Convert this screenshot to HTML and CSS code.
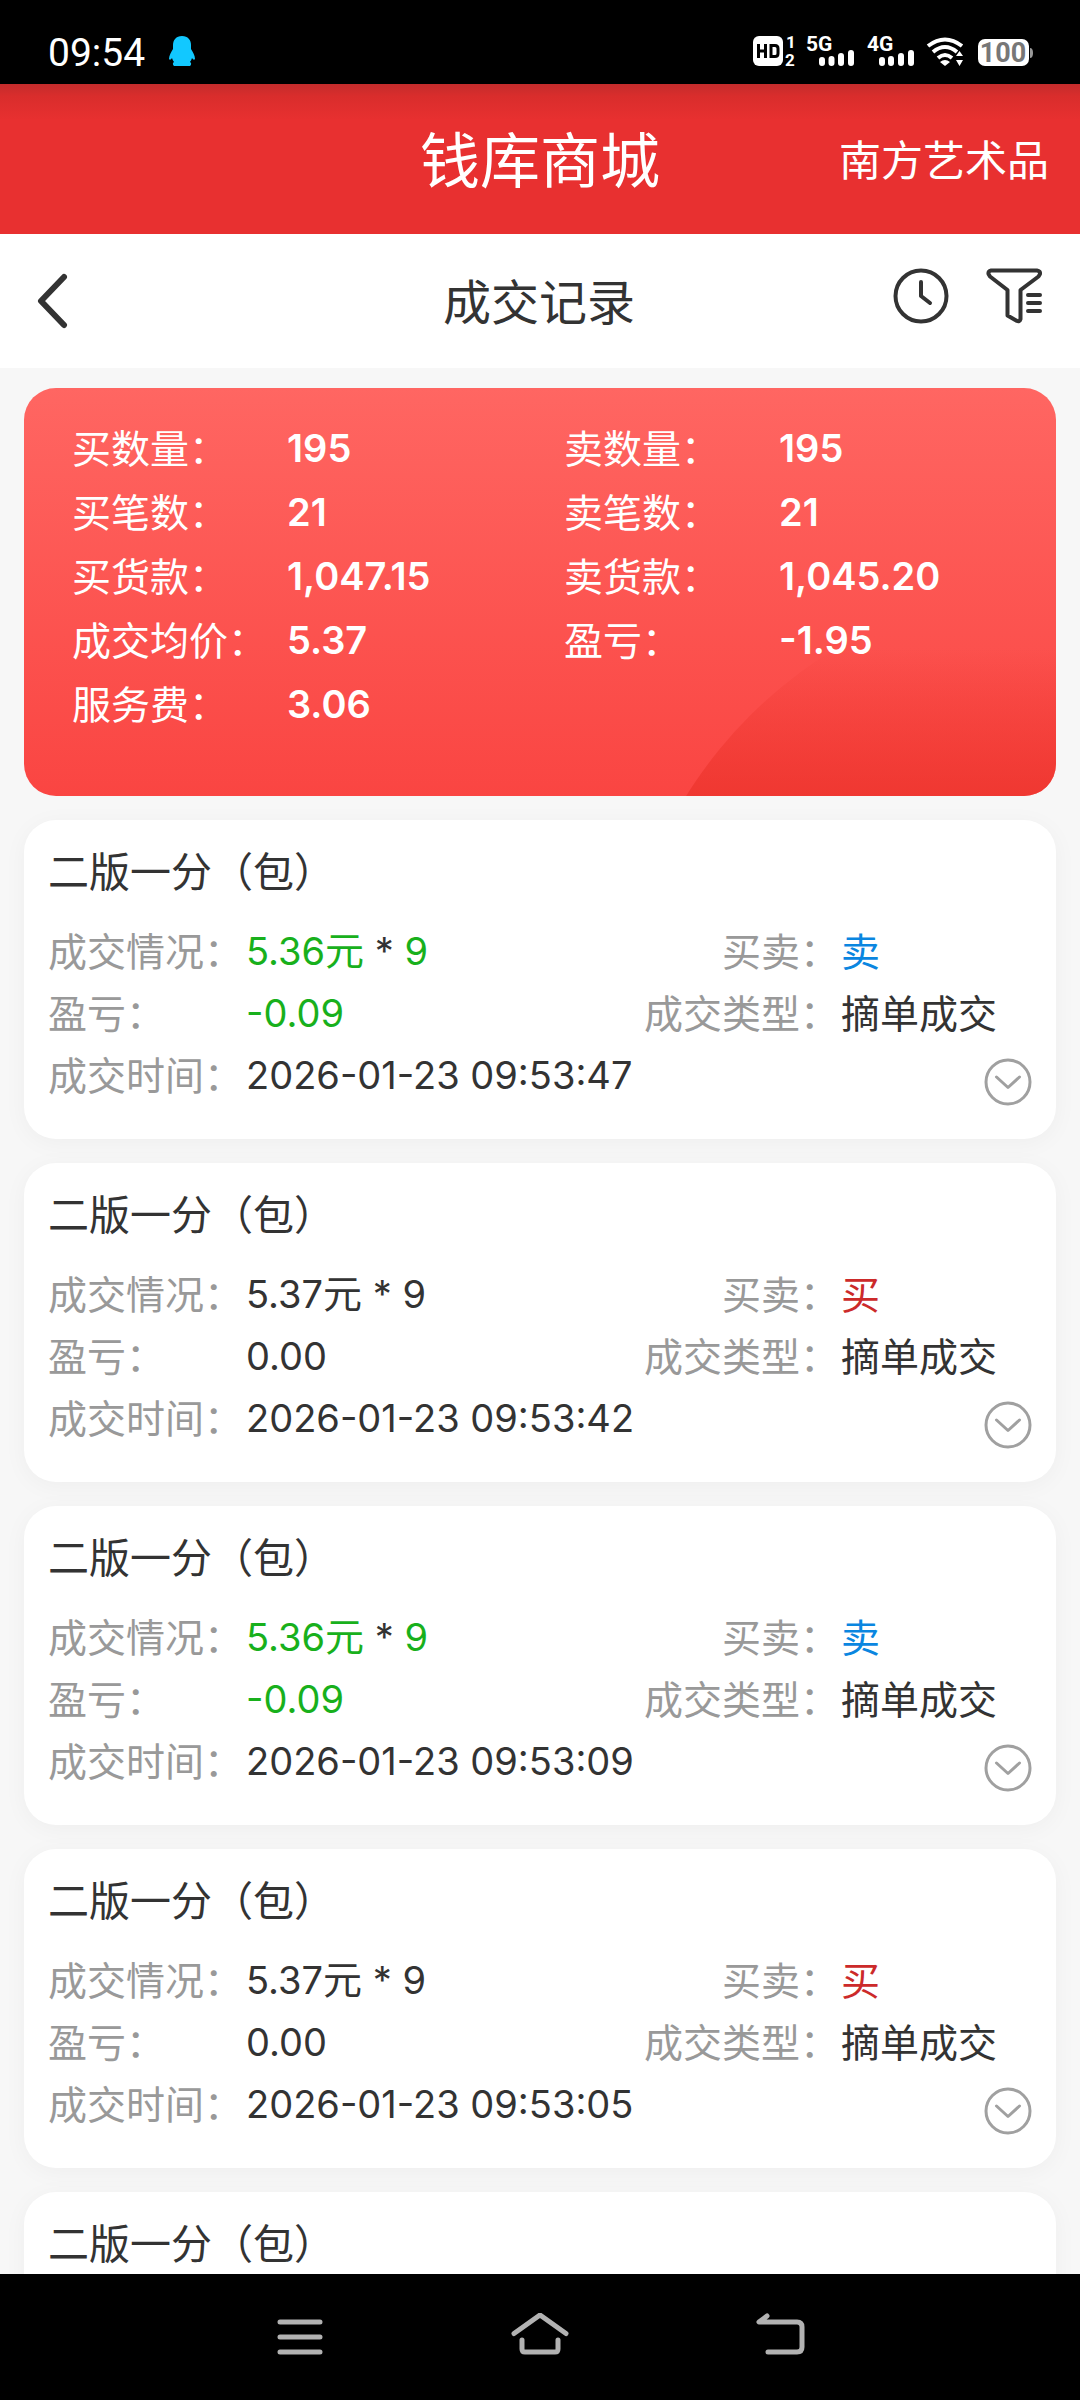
FILE: index.html
```html
<!DOCTYPE html>
<html lang="zh-CN">
<head>
<meta charset="utf-8">
<meta name="viewport" content="width=device-width, initial-scale=1">
<title>成交记录</title>
<link rel="stylesheet" href="styles.css">
</head>
<body>
<svg class="defs" width="0" height="0" aria-hidden="true">
  <symbol id="expand" viewBox="0 0 48 48">
    <circle cx="24" cy="24" r="22" fill="none" stroke="#a0a0a0" stroke-width="3"/>
    <path d="M12.500 19 24 29.500 35.500 19" fill="none" stroke="#a0a0a0" stroke-width="3" stroke-linecap="round" stroke-linejoin="round"/>
  </symbol>
</svg>
<div class="app">
  <div class="status">
    <span class="status-time">09:54</span>
    <svg class="status-qq" width="26" height="30" viewBox="0 0 26 30" aria-hidden="true">
      <path fill="#12c8ff" d="M13 0C7 0 4 4 4 9v4C2 16 0 20 0 23c1 1.500 2.500 0 3-1 .5 2 1.500 3 2 4-1.500.5-1.500 3 0 4h16c1.500-1 1.500-3.500 0-4 .5-1 1.500-2 2-4 .5 1 2 2.500 3 1 0-3-2-7-4-10V9c0-5-3-9-9-9z"/>
    </svg>
    <svg class="status-icons" width="280" height="50" viewBox="0 -10 280 50" fill="#fff" aria-hidden="true">
      <rect width="30" height="30" rx="6"/>
      <path d="M5.500 8v14M12.500 8v14M5.500 15h7M18 9.500h4q3 0 3 3v5q0 3-3 3h-4z" fill="none" stroke="#000" stroke-width="3"/>
      <text x="33" y="12" class="sim">1</text>
      <text x="32" y="30" class="sim">2</text>
      <text x="53" y="15" class="net">5G</text>
      <path d="M69 24v3M78.500 23v4M88 20v7M98 17v10" stroke="#fff" stroke-width="6" stroke-linecap="round"/>
      <text x="114" y="15" class="net">4G</text>
      <path d="M129 24v3M138 23v4M148 20v7M158 17v10" stroke="#fff" stroke-width="6" stroke-linecap="round"/>
      <g fill="none" stroke="#fff" stroke-width="4">
        <path d="M175 10q17-13 34 0"/>
        <path d="M180 16q12-10 24 0"/>
        <path d="M185 22q7-6 14 0"/>
      </g>
      <path d="M187 26q5-4 10 0l-5 4zM203 20l3.500-5 3.500 5zM203 24h7l-3.500 6z"/>
      <rect x="225" y="3" width="51" height="27" rx="7"/>
      <path d="M277 12q3 0 3 5t-3 5z" fill="#999"/>
      <text x="250" y="26" class="battery" text-anchor="middle">100</text>
    </svg>
  </div>

  <header class="brand">
    <h1 class="brand-name">钱库商城</h1>
    <a class="brand-link" href="#">南方艺术品</a>
  </header>

  <div class="toolbar">
    <button class="icon-button" type="button" aria-label="返回">
      <svg width="32" height="56" viewBox="0 0 32 56"><path d="M28 4 5 28 28 52" fill="none" stroke="#333" stroke-width="6" stroke-linecap="round" stroke-linejoin="round"/></svg>
    </button>
    <h2 class="toolbar-title">成交记录</h2>
    <div class="toolbar-actions">
      <button class="icon-button" type="button" aria-label="时间">
        <svg width="56" height="56" viewBox="0 0 56 56" fill="none" stroke="#333" stroke-width="4" stroke-linecap="round"><circle cx="28" cy="28" r="25.500"/><path d="M28 14v14l9 7" stroke-linejoin="round"/></svg>
      </button>
      <button class="icon-button" type="button" aria-label="筛选">
        <svg width="56" height="56" viewBox="0 0 56 56" fill="none" stroke="#333" stroke-width="4" stroke-linecap="round" stroke-linejoin="round"><path d="M5 2.500h46q3.500.5 3 3.500l-1.500 2.500L34.500 22v29q-1 3-3.500 2l-9.500-5.500V22L4 8.500 2.500 6q-.5-3 2.500-3.500zM42 27h12M42 35h12M42 43h12"/></svg>
      </button>
    </div>
  </div>

  <main class="content">
    <section class="summary">
      <span>买数量：</span><b>195</b><span>卖数量：</span><b>195</b>
      <span>买笔数：</span><b>21</b><span>卖笔数：</span><b>21</b>
      <span>买货款：</span><b>1,047.15</b><span>卖货款：</span><b>1,045.20</b>
      <span>成交均价：</span><b>5.37</b><span>盈亏：</span><b>-1.95</b>
      <span>服务费：</span><b>3.06</b>
    </section>

    <article class="card">
      <h3 class="card-title">二版一分（包）</h3>
      <div class="details">
        <span class="label">成交情况：</span><span class="value"><span class="gain">5.36<span class="unit">元</span></span> * <span class="gain">9</span></span>
        <span class="label end">买卖：</span><span class="text sell">卖</span>
        <span class="label">盈亏：</span><span class="value gain">-0.09</span>
        <span class="label end">成交类型：</span><span class="text">摘单成交</span>
        <span class="label">成交时间：</span><time class="value wide">2026-01-23 09:53:47</time>
        <button class="icon-button expand" type="button" aria-label="展开"><svg width="48" height="48"><use href="#expand"/></svg></button>
      </div>
    </article>

    <article class="card">
      <h3 class="card-title">二版一分（包）</h3>
      <div class="details">
        <span class="label">成交情况：</span><span class="value">5.37<span class="unit">元</span> * 9</span>
        <span class="label end">买卖：</span><span class="text buy">买</span>
        <span class="label">盈亏：</span><span class="value">0.00</span>
        <span class="label end">成交类型：</span><span class="text">摘单成交</span>
        <span class="label">成交时间：</span><time class="value wide">2026-01-23 09:53:42</time>
        <button class="icon-button expand" type="button" aria-label="展开"><svg width="48" height="48"><use href="#expand"/></svg></button>
      </div>
    </article>

    <article class="card">
      <h3 class="card-title">二版一分（包）</h3>
      <div class="details">
        <span class="label">成交情况：</span><span class="value"><span class="gain">5.36<span class="unit">元</span></span> * <span class="gain">9</span></span>
        <span class="label end">买卖：</span><span class="text sell">卖</span>
        <span class="label">盈亏：</span><span class="value gain">-0.09</span>
        <span class="label end">成交类型：</span><span class="text">摘单成交</span>
        <span class="label">成交时间：</span><time class="value wide">2026-01-23 09:53:09</time>
        <button class="icon-button expand" type="button" aria-label="展开"><svg width="48" height="48"><use href="#expand"/></svg></button>
      </div>
    </article>

    <article class="card">
      <h3 class="card-title">二版一分（包）</h3>
      <div class="details">
        <span class="label">成交情况：</span><span class="value">5.37<span class="unit">元</span> * 9</span>
        <span class="label end">买卖：</span><span class="text buy">买</span>
        <span class="label">盈亏：</span><span class="value">0.00</span>
        <span class="label end">成交类型：</span><span class="text">摘单成交</span>
        <span class="label">成交时间：</span><time class="value wide">2026-01-23 09:53:05</time>
        <button class="icon-button expand" type="button" aria-label="展开"><svg width="48" height="48"><use href="#expand"/></svg></button>
      </div>
    </article>

    <article class="card">
      <h3 class="card-title">二版一分（包）</h3>
    </article>
  </main>

  <nav class="system-nav">
    <button class="icon-button" type="button" aria-label="最近任务">
      <svg width="60" height="48" viewBox="0 0 60 48" fill="none" stroke="#b2b2b2" stroke-width="5" stroke-linecap="round"><path d="M10 9h40M10 24h40M10 39h40"/></svg>
    </button>
    <button class="icon-button" type="button" aria-label="主页">
      <svg width="60" height="48" viewBox="0 0 60 48" fill="none" stroke="#b2b2b2" stroke-width="5" stroke-linecap="round" stroke-linejoin="round"><path d="M4 20.500 30 2l26 18.500M12 27v9q0 3 3 3h30q3 0 3-3v-9"/></svg>
    </button>
    <button class="icon-button" type="button" aria-label="后退">
      <svg width="60" height="48" viewBox="0 0 60 48" fill="none" stroke="#b2b2b2" stroke-width="5" stroke-linecap="round" stroke-linejoin="round"><path d="M17 3 9 9h38q5 0 5 5v20q0 5-5 5H18"/></svg>
    </button>
  </nav>
</div>
</body>
</html>
```

FILE: styles.css
```css
* {
  box-sizing: border-box;
}

body {
  margin: 0;
  background: #000;
  color: #333;
  font-family: "Noto Sans CJK SC", sans-serif;
  font-size: 39px;
}

h1,
h2,
h3 {
  margin: 0;
  font-weight: 400;
}

.defs {
  position: absolute;
}

.app {
  display: flex;
  flex-direction: column;
  height: 100vh;
}

.icon-button {
  display: flex;
  padding: 0;
  border: 0;
  background: none;
}

/* System status bar */
.status {
  display: flex;
  flex: none;
  align-items: center;
  height: 84px;
  padding: 18px 47px 0 48px;
  background: #000;
  color: #fff;
}

.status-time {
  padding-top: 4px;
  font-family: Roboto, sans-serif;
  font-size: 39px;
  line-height: 48px;
}

.status-qq {
  margin-left: 24px;
}

.status-icons {
  margin-left: auto;
}

.sim,
.net,
.battery {
  font-family: Roboto, sans-serif;
  font-weight: 700;
}

.sim {
  font-size: 17px;
}

.net {
  font-size: 21px;
}

.battery {
  font-size: 27px;
  fill: #777;
}

/* Brand bar */
.brand {
  display: grid;
  flex: none;
  grid-template-columns: 1fr auto 1fr;
  align-items: center;
  height: 150px;
  padding: 0 31px 4px;
  background: linear-gradient(#c42c2c, #d92d2c 12px, #e83030 36px);
  color: #fff;
}

.brand-name {
  grid-column: 2;
  font-size: 60px;
  line-height: 90px;
}

.brand-link {
  justify-self: end;
  color: inherit;
  font-size: 42px;
  text-decoration: none;
}

/* Page toolbar */
.toolbar {
  display: grid;
  flex: none;
  grid-template-columns: 1fr auto 1fr;
  align-items: center;
  height: 134px;
  padding: 0 38px 0 36px;
  background: #fff;
}

.toolbar-title {
  padding-bottom: 4px;
  font-size: 48px;
  line-height: 72px;
}

.toolbar-actions {
  display: flex;
  gap: 37px;
  justify-self: end;
  padding-bottom: 10px;
}

/* Scrolling content */
.content {
  display: flex;
  flex: 1;
  flex-direction: column;
  gap: 24px;
  min-height: 0;
  padding: 20px 24px 0;
  overflow: hidden;
  background: #f7f7f7;
}

.summary {
  position: relative;
  z-index: 0;
  display: grid;
  flex: none;
  grid-template-columns: 215px 1fr 215px 1fr;
  padding: 28px 0 60px 48px;
  overflow: hidden;
  border-radius: 32px;
  background: linear-gradient(#ff6662, #fa4542);
  color: #fff;
  line-height: 60px;
}

.summary::after {
  position: absolute;
  z-index: -1;
  right: -462px;
  bottom: -688px;
  width: 900px;
  height: 900px;
  border-radius: 50%;
  background: linear-gradient(rgba(235, 50, 42, 0) 64px, rgba(235, 50, 42, 0.7) 212px);
  content: "";
}

.summary b {
  font-family: Inter, sans-serif;
  font-size: 38px;
  font-weight: 600;
  line-height: 64px;
}

.card {
  flex: none;
  min-height: 319px;
  padding: 24px 24px 33px;
  border-radius: 32px;
  background: #fff;
  box-shadow: 0 4px 24px rgba(0, 0, 0, 0.04);
}

.card-title {
  font-size: 41px;
  line-height: 50px;
}

.details {
  display: grid;
  grid-template-columns: 198px 1fr auto 191px;
  margin-top: 26px;
  line-height: 58px;
}

.label {
  color: #999;
}

.end {
  padding-right: 2px;
  text-align: right;
}

.value {
  font-family: Inter, "Noto Sans CJK SC", sans-serif;
  font-size: 38px;
  line-height: 62px;
}

.wide {
  grid-column: span 2;
}

.unit {
  font-size: 39px;
  line-height: 1;
}

.gain {
  color: #18b01c;
}

.sell {
  color: #0a86e0;
}

.buy {
  color: #cc2a2a;
}

.expand {
  align-self: end;
  justify-self: end;
}

/* System navigation */
.system-nav {
  display: grid;
  flex: none;
  grid-template-columns: repeat(3, 1fr);
  align-items: center;
  justify-items: center;
  height: 126px;
  padding: 0 16.67%;
  background: #000;
}
```
